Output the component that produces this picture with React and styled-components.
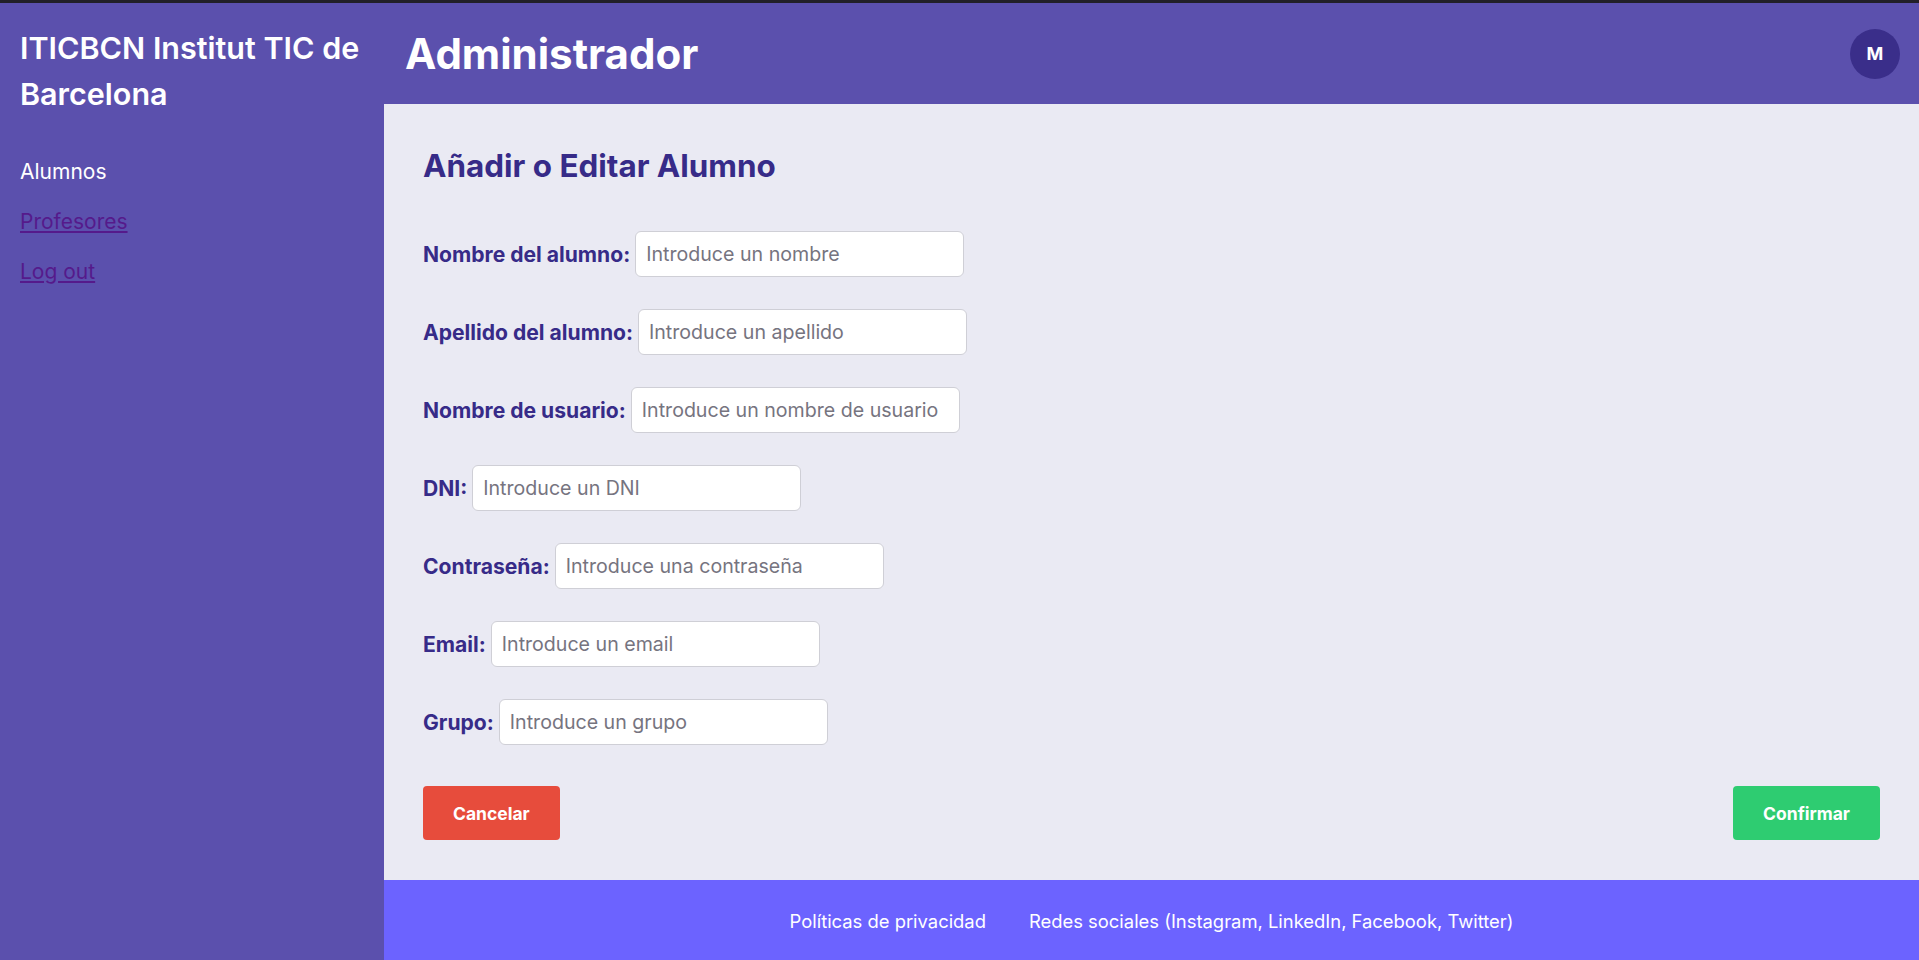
import styled, { createGlobalStyle } from "styled-components";

const GlobalStyle = createGlobalStyle`
  * {
    box-sizing: border-box;
  }

  body {
    margin: 0;
    font-family: "Inter", "Noto Sans", sans-serif;
    background: #222028;
  }
`

const Page = styled.div`
  height: 957px;
  margin-top: 3px;
  display: grid;
  grid-template-columns: 384px 1fr;
`

const Sidebar = styled.aside`
  background: #5b50ad;
  padding: 22px 20px;
`

const Brand = styled.h1`
  margin: 0 0 40px;
  color: #fff;
  font-size: 30.5px;
  font-weight: 600;
  line-height: 46px;
`

const Nav = styled.nav`
  display: flex;
  flex-direction: column;
  gap: 21px;
`

const NavLink = styled.a`
  font-size: 21px;
  line-height: 29px;
  color: ${(p) => (p.$active ? "#fff" : "#551a8b")};
  text-decoration: ${(p) => (p.$active ? "none" : "underline")};
`

const Right = styled.div`
  display: flex;
  flex-direction: column;
`

const Header = styled.header`
  height: 101px;
  background: #5b50ad;
  display: flex;
  align-items: center;
  justify-content: space-between;
  padding: 0 19px 0 21px;
`

const Title = styled.h1`
  margin: 0;
  color: #fff;
  font-size: 42px;
  font-weight: 700;
`

const Avatar = styled.div`
  width: 50px;
  height: 50px;
  border-radius: 50%;
  background: #3a2e8a;
  color: #fff;
  display: flex;
  align-items: center;
  justify-content: center;
  font-size: 18px;
  font-weight: 700;
`

const Main = styled.main`
  flex: 1;
  background: #eaeaf3;
  padding: 40px 39px;
`

const Heading = styled.h2`
  margin: 0 0 42px;
  color: #372b88;
  font-size: 31.4px;
  font-weight: 700;
  line-height: 45px;
`

const Form = styled.form`
  display: flex;
  flex-direction: column;
  gap: 32px;
`

const Row = styled.div`
  display: flex;
  align-items: center;
  gap: 5px;
`

const Label = styled.label`
  color: #372b88;
  font-size: 21.1px;
  font-weight: 700;
`

const Input = styled.input`
  width: 329px;
  height: 46px;
  padding: 0 10px;
  border: 1px solid #cfcfd6;
  border-radius: 6px;
  background: #fff;
  font-family: inherit;
  font-size: 19.6px;

  &::placeholder {
    color: #76747f;
  }
`

const Actions = styled.div`
  margin-top: 41px;
  display: flex;
  justify-content: space-between;
`

const Button = styled.button`
  height: 54px;
  padding: 0 30px;
  border: none;
  border-radius: 4px;
  background: ${(p) => (p.$confirm ? "#2ecc71" : "#e74c3c")};
  color: #fff;
  font-family: inherit;
  font-size: 17.5px;
  font-weight: 700;
`

const Footer = styled.footer`
  height: 81px;
  background: #6c63ff;
  display: flex;
  align-items: center;
  justify-content: center;
  gap: 43px;
  color: #fff;
  font-size: 18.4px;
`

const fields = [
  ["nombre", "Nombre del alumno:", "Introduce un nombre"],
  ["apellido", "Apellido del alumno:", "Introduce un apellido"],
  ["usuario", "Nombre de usuario:", "Introduce un nombre de usuario"],
  ["dni", "DNI:", "Introduce un DNI"],
  ["password", "Contraseña:", "Introduce una contraseña"],
  ["email", "Email:", "Introduce un email"],
  ["grupo", "Grupo:", "Introduce un grupo"],
]

const App = () => {
  return (
    <>
      <GlobalStyle />
      <Page>
        <Sidebar>
          <Brand>ITICBCN Institut TIC de Barcelona</Brand>
          <Nav>
            <NavLink $active>Alumnos</NavLink>
            <NavLink href="#">Profesores</NavLink>
            <NavLink href="#">Log out</NavLink>
          </Nav>
        </Sidebar>
        <Right>
          <Header>
            <Title>Administrador</Title>
            <Avatar>M</Avatar>
          </Header>
          <Main>
            <Heading>Añadir o Editar Alumno</Heading>
            <Form>
              {fields.map(([id, label, ph]) => (
                <Row key={id}>
                  <Label htmlFor={id}>{label}</Label>
                  <Input id={id} type={id === "password" ? "password" : "text"} placeholder={ph} />
                </Row>
              ))}
            </Form>
            <Actions>
              <Button type="button">Cancelar</Button>
              <Button type="button" $confirm>Confirmar</Button>
            </Actions>
          </Main>
          <Footer>
            <span>Políticas de privacidad</span>
            <span>Redes sociales (Instagram, LinkedIn, Facebook, Twitter)</span>
          </Footer>
        </Right>
      </Page>
    </>
  )
}

export default App;
